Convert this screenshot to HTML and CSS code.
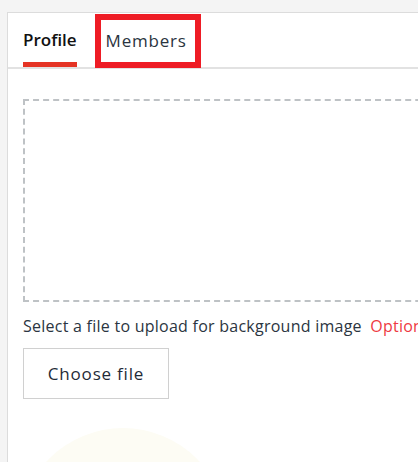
FILE: index.html
```html
<!DOCTYPE html>
<html>
<head>
<meta charset="utf-8">
<link rel="stylesheet" href="styles.css">
</head>
<body>
<div class="card">
  <div class="tabs">
    <div class="tab active">Profile</div>
    <div class="tab focused">Members</div>
  </div>
  <div class="content">
    <div class="dropzone"></div>
    <div class="hint">Select a file to upload for background image <span class="optional">Optional</span></div>
    <button class="choose">Choose file</button>
    <div class="blob"></div>
  </div>
</div>
</body>
</html>
```
FILE: styles.css
```css
html, body {
  margin: 0;
  padding: 0;
  background: #f4f4f4;
  overflow: hidden;
  height: 462px;
}
body {
  font-family: "Open Sans", Lato, sans-serif;
  color: #1f2b38;
}
.card {
  margin-top: 12px;
  margin-left: 7px;
  width: 600px;
  height: 600px;
  background: #fff;
  border-top: 1px solid #dcdcdc;
  border-left: 1px solid #dcdcdc;
  box-sizing: border-box;
  position: relative;
  overflow: hidden;
}
.tabs {
  display: flex;
  align-items: stretch;
  height: 56px;
  border-bottom: 2px solid #e2e2e2;
  padding-left: 15px;
  box-sizing: border-box;
}
.tab {
  font-size: 17px;
  display: flex;
  align-items: center;
  box-sizing: border-box;
}
.tab.active {
  font-weight: 600;
  color: #111;
  border-bottom: 5px solid #e53324;
  padding-top: 3px;
}
.tab.focused {
  margin-left: 18px;
  margin-top: 1px;
  margin-bottom: -1px;
  border: 6px solid #ee1c25;
  padding: 0 8px 2px 5px;
  color: #2a3440;
  font-weight: 400;
  letter-spacing: 0.8px;
}
.content {
  padding: 30px 0 0 15px;
  position: relative;
}
.dropzone {
  height: 203px;
  border: 2px dashed #bec2c5;
  box-sizing: border-box;
  width: 700px;
}
.hint {
  margin-top: 13px;
  font-size: 16px;
  white-space: nowrap;
  color: #2b3541;
  letter-spacing: 0.25px;
}
.optional {
  color: #ee3a43;
  margin-left: 4px;
}
.choose {
  display: block;
  margin-top: 11px;
  width: 146px;
  height: 51px;
  background: #fff;
  border: 1px solid #d0d0d0;
  font-family: inherit;
  font-size: 17px;
  letter-spacing: 0.8px;
  color: #1f2b38;
  padding: 0;
}
.blob {
  position: absolute;
  left: 11px;
  top: 359px;
  width: 208px;
  height: 208px;
  border-radius: 50%;
  background: #fdfcf4;
}
```
